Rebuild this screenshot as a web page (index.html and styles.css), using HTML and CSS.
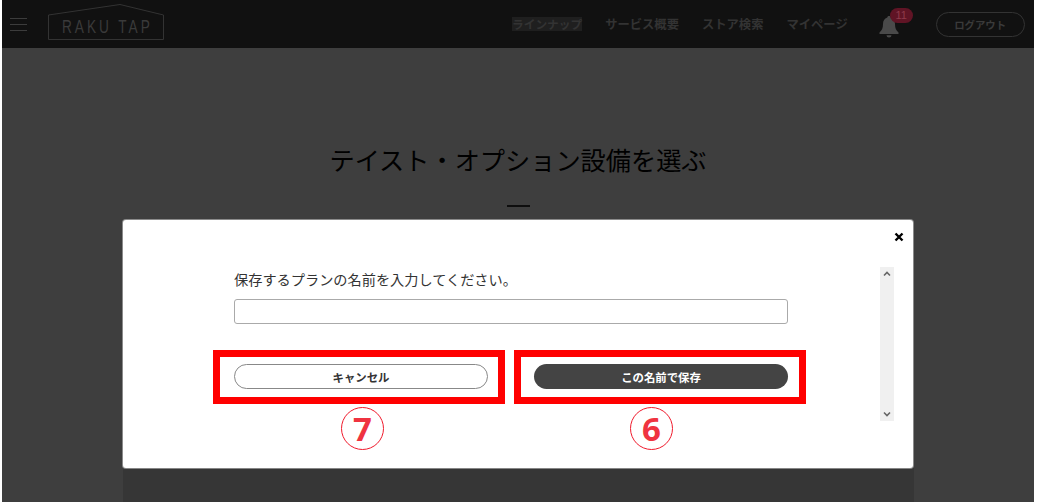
FILE: index.html
```html
<!DOCTYPE html>
<html lang="ja">
<head>
    <meta charset="UTF-8">
    <title>RAKU TAP</title>
    <link rel="stylesheet" href="styles.css">
</head>
<body>
    <div class="page">
        <div class="header">
            <div class="menu-btn"><span></span><span></span><span></span></div>
            <svg class="logo" width="116" height="38" viewBox="0 0 116 38">
                <path d="M.5 12 72 1.500 115.500 12v24.500H.5z" fill="none" stroke="#333" stroke-width="1"/>
                <text transform="translate(14 30) scale(.72 1)" class="logo-text" textLength="122" lengthAdjust="spacing">RAKU TAP</text>
            </svg>
            <div class="nav">
                <span class="nav-item active">ラインナップ</span>
                <span class="nav-item">サービス概要</span>
                <span class="nav-item">ストア検索</span>
                <span class="nav-item">マイページ</span>
            </div>
            <div class="bell">
                <svg width="20" height="23" viewBox="0 0 20 23">
                    <path d="M10 1c1 0 1.700.7 1.700 1.600 3 .9 4.300 3.400 4.300 6.400 0 4 1 6.200 3.500 8.600V19H.5v-1.400C3 15.200 4 13 4 9c0-3 1.300-5.500 4.300-6.400C8.300 1.700 9 1 10 1z" fill="#4a4a4a"/>
                    <path d="M7.500 20.200h5a2.500 2.300 0 0 1-5 0z" fill="#4a4a4a"/>
                </svg>
                <span class="badge">11</span>
            </div>
            <div class="logout">ログアウト</div>
        </div>

        <div class="content">
            <h1 class="title">テイスト・オプション設備を選ぶ</h1>
            <div class="title-bar"></div>
        </div>
        <div class="panel"></div>
    </div>

    <div class="modal">
        <div class="close">
            <svg width="10" height="10" viewBox="0 0 10 10">
                <path d="M1.500 1.500l7 7M8.500 1.500l-7 7" stroke="#000" stroke-width="2.400" fill="none"/>
            </svg>
        </div>
        <div class="modal-body">
            <div class="form">
                <p class="form-label">保存するプランの名前を入力してください。</p>
                <div class="name-input"></div>
                <div class="form-btns">
                    <div class="btn btn-cancel">キャンセル</div>
                    <div class="btn btn-save">この名前で保存</div>
                </div>
            </div>
            <div class="scrollbar">
                <svg width="14" height="10" viewBox="0 0 14 10"><path d="M4 6.500l3-3 3 3" stroke="#666" stroke-width="1.600" fill="none"/></svg>
                <svg width="14" height="10" viewBox="0 0 14 10"><path d="M4 3.500l3 3 3-3" stroke="#666" stroke-width="1.600" fill="none"/></svg>
            </div>
        </div>
        <!-- annotations on top of the screenshot -->
        <div class="mark mark-cancel"></div>
        <div class="mark mark-save"></div>
        <div class="num num-cancel">7</div>
        <div class="num num-save">6</div>
    </div>
</body>
</html>
```

FILE: styles.css
```css
* {
    margin: 0;
    padding: 0;
    box-sizing: border-box;
}

body {
    font-family: "Noto Sans CJK JP", "Noto Sans", sans-serif;
    background: #fff;
    overflow: hidden;
    height: 502px;
    position: relative;
}

.page {
    margin: 0 3px 0 2px;
    height: 502px;
    background: #3e3e3e;
    display: flex;
    flex-direction: column;
}

.header {
    height: 48px;
    background: #111;
    display: flex;
    align-items: center;
    padding: 0 8px;
}

.menu-btn {
    width: 17px;
    display: flex;
    flex-direction: column;
    gap: 5px;
    margin-right: 21px;
}

.menu-btn span {
    height: 1px;
    background: #3c3c3c;
}

.logo {
    margin-top: -5px;
    flex-shrink: 0;
}

.logo-text {
    font-family: "Liberation Sans", sans-serif;
    font-size: 19px;
    fill: #3a3a3a;
}

.nav {
    display: flex;
    align-items: center;
    gap: 23px;
    margin-left: 348px;
    font-size: 12.300px;
    font-weight: 700;
    color: #333;
}

.nav-item {
    line-height: 14px;
    white-space: nowrap;
}

.nav-item.active {
    font-size: 11.700px;
    background: #1f1f1f;
    color: #333;
}

.bell {
    position: relative;
    width: 20px;
    height: 23px;
    margin-left: 31px;
    margin-top: 5px;
}

.badge {
    position: absolute;
    left: 11px;
    top: -7px;
    width: 23px;
    height: 15px;
    border-radius: 8px;
    background: #601425;
    color: #8f3a4a;
    font-family: "Liberation Sans", sans-serif;
    font-size: 11px;
    line-height: 15px;
    text-align: center;
}

.logout {
    width: 89px;
    height: 25px;
    margin-left: 37px;
    border: 1px solid #333;
    border-radius: 13px;
    color: #3a3a3a;
    font-size: 10.400px;
    font-weight: 700;
    line-height: 24px;
    text-align: center;
}

.content {
    flex: 1;
    text-align: center;
    padding-top: 93px;
}

.title {
    font-size: 25.200px;
    font-weight: 400;
    line-height: 36px;
    color: #000;
}

.title-bar {
    width: 23px;
    height: 2px;
    background: #0e0e0e;
    margin: 28px auto 0;
}

.panel {
    height: 34px;
    margin: 0 120px 0 121px;
    background: #363636;
}

.modal {
    position: absolute;
    left: 123px;
    top: 220px;
    width: 790px;
    height: 248px;
    background: #fff;
    border-radius: 3px;
    box-shadow: 0 0 0 1px rgba(255, 255, 255, 0.4);
}

.close {
    position: absolute;
    right: 9px;
    top: 12px;
    line-height: 0;
}

.modal-body {
    display: flex;
    justify-content: space-between;
    padding: 47px 19px 0 111px;
}

.form {
    width: 554px;
}

.form-label {
    font-size: 14.200px;
    line-height: 20px;
    color: #333;
    margin-top: 2px;
}

.name-input {
    height: 25px;
    margin-top: 10px;
    border: 1px solid #aaa;
    border-radius: 3px;
}

.form-btns {
    display: flex;
    justify-content: space-between;
    margin-top: 40px;
}

.btn {
    width: 254px;
    height: 25px;
    border-radius: 13px;
    font-size: 11.400px;
    font-weight: 700;
    line-height: 26px;
    text-align: center;
}

.btn-cancel {
    border: 1px solid #888;
    color: #333;
    line-height: 24px;
}

.btn-save {
    background: #444;
    color: #fff;
}

.scrollbar {
    width: 14px;
    height: 154px;
    background: #f0f0f0;
    display: flex;
    flex-direction: column;
    justify-content: space-between;
    padding: 2px 0;
}

.mark {
    position: absolute;
    top: 130px;
    width: 292px;
    height: 54px;
    border: 7px solid #f00;
}

.mark-cancel {
    left: 90px;
}

.mark-save {
    left: 391px;
}

.num {
    position: absolute;
    top: 187px;
    width: 43px;
    height: 43px;
    border: 1px solid #f01a2c;
    border-radius: 50%;
    color: #ef3340;
    font-family: "Noto Sans", sans-serif;
    font-size: 33px;
    font-weight: 700;
    line-height: 41px;
    text-align: center;
}

.num-cancel {
    left: 218px;
}

.num-save {
    left: 507px;
}
```
